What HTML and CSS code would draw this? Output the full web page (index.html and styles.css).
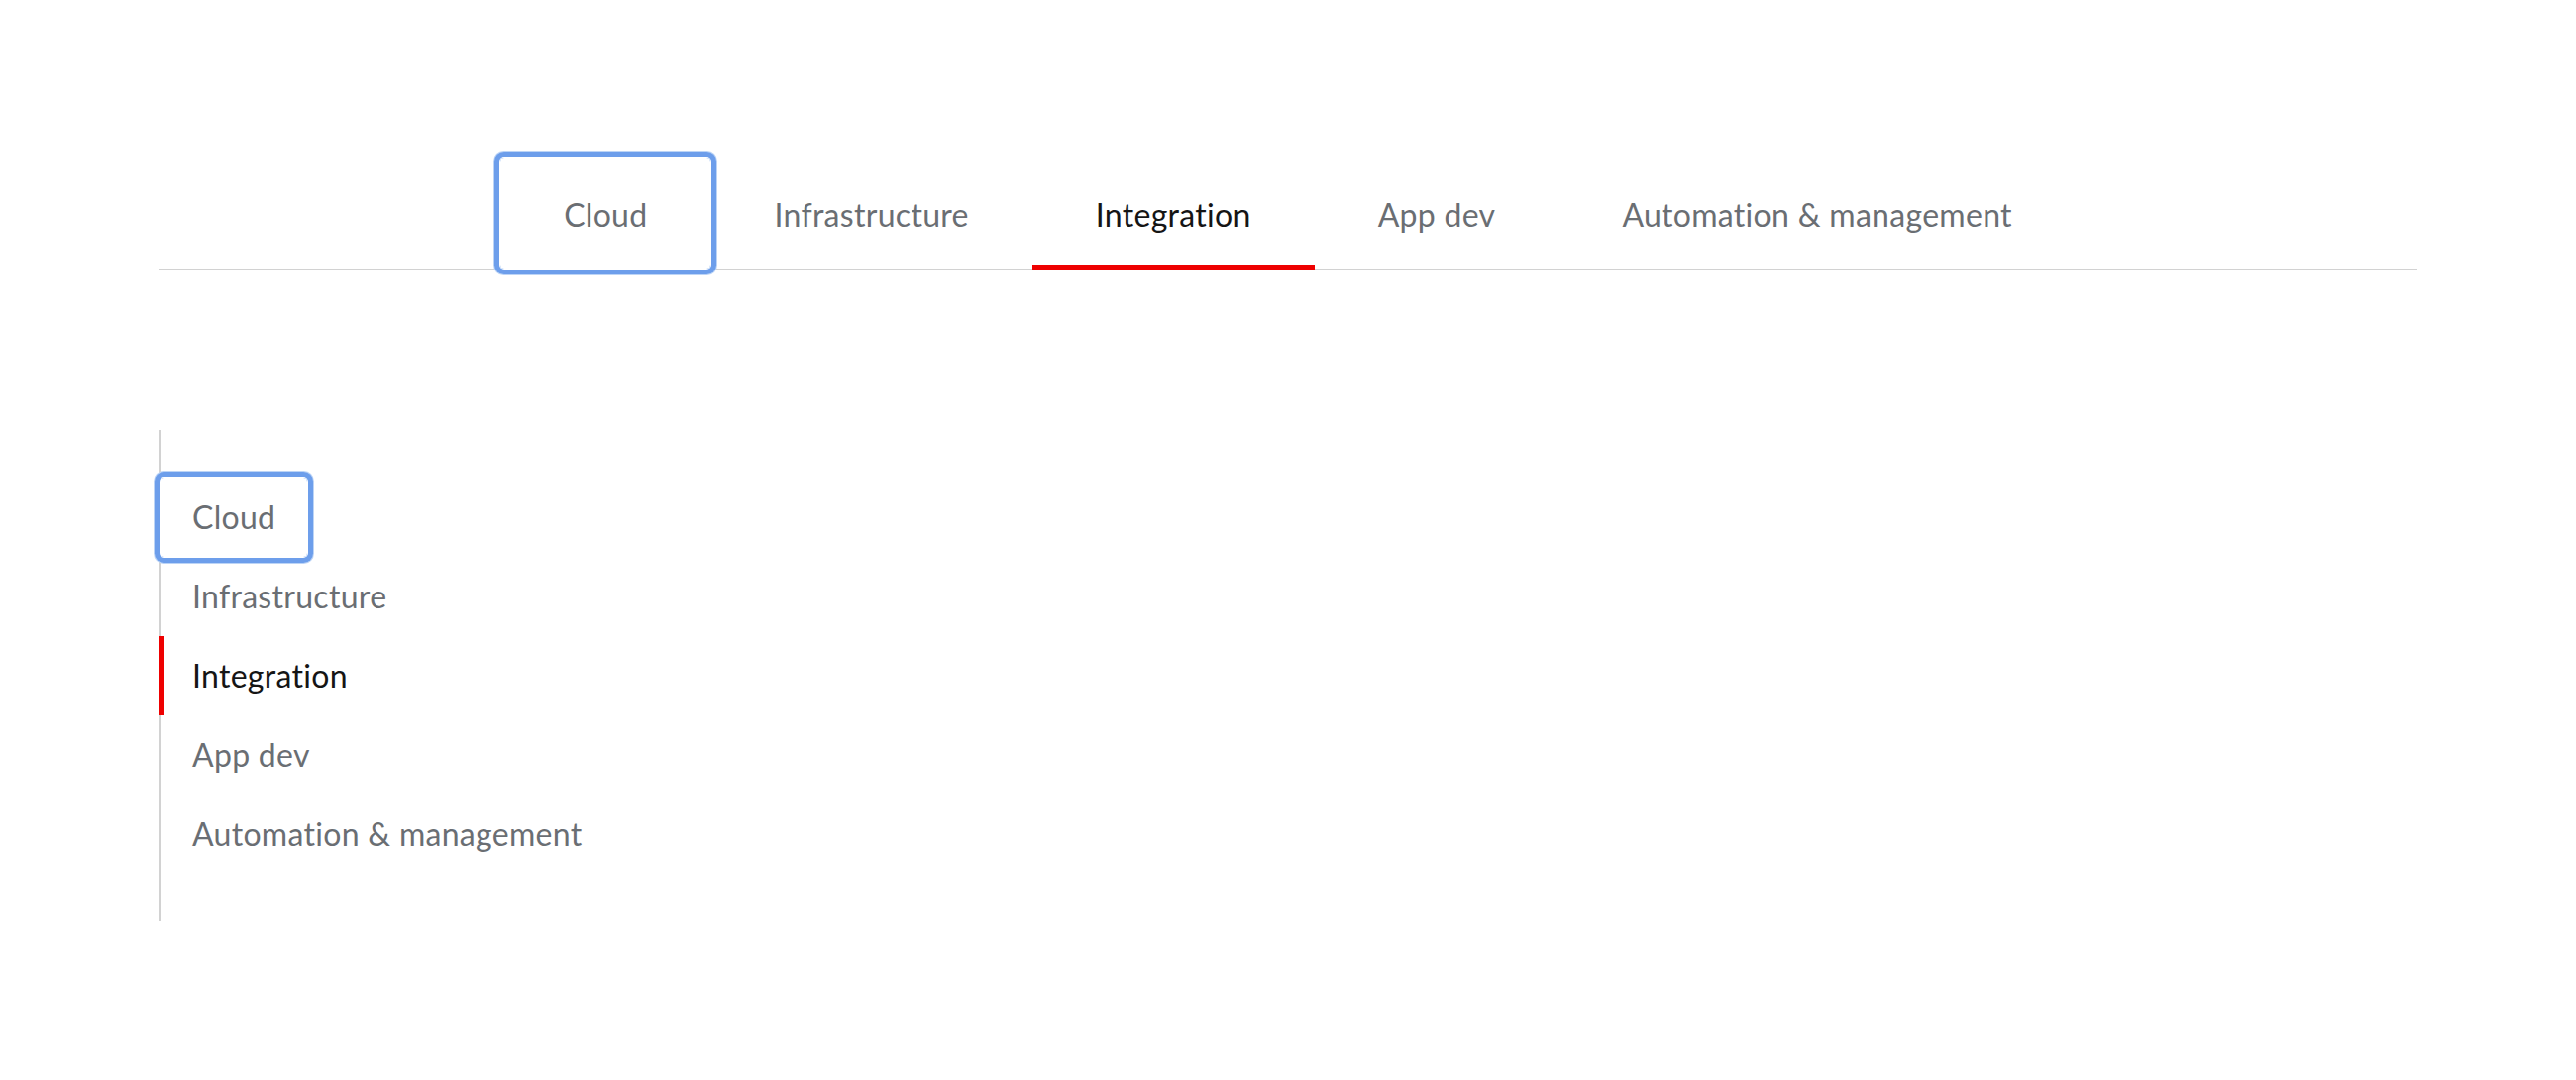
FILE: index.html
```html
<!DOCTYPE html>
<html lang="en">
<head>
<meta charset="utf-8">
<title>Tabs</title>
<link rel="stylesheet" href="styles.css">
</head>
<body>
<main class="page">
  <nav class="tabs" aria-label="Horizontal tabs">
    <ul class="tabs-list">
      <li class="tab"><button class="tab-link is-focused" type="button">Cloud</button></li>
      <li class="tab"><button class="tab-link" type="button">Infrastructure</button></li>
      <li class="tab is-active"><button class="tab-link" type="button">Integration</button></li>
      <li class="tab"><button class="tab-link" type="button">App dev</button></li>
      <li class="tab"><button class="tab-link" type="button">Automation &amp; management</button></li>
    </ul>
  </nav>

  <nav class="vtabs" aria-label="Vertical tabs">
    <ul class="vtabs-list">
      <li class="vtab"><button class="vtab-link is-focused" type="button">Cloud</button></li>
      <li class="vtab"><button class="vtab-link" type="button">Infrastructure</button></li>
      <li class="vtab is-active"><button class="vtab-link" type="button">Integration</button></li>
      <li class="vtab"><button class="vtab-link" type="button">App dev</button></li>
      <li class="vtab"><button class="vtab-link" type="button">Automation &amp; management</button></li>
    </ul>
  </nav>
</main>
</body>
</html>
```

FILE: styles.css
```css
html, body {
  margin: 0;
  padding: 0;
  background: #ffffff;
}

body {
  font-family: "Lato", "Open Sans", sans-serif;
  color: #151515;
}

.page {
  padding: 159px 160px 0;
}

ul {
  list-style: none;
  margin: 0;
  padding: 0;
}

button {
  font: inherit;
  background: none;
  border: 0;
  margin: 0;
  cursor: pointer;
}

/* Horizontal tabs */
.tabs {
  border-bottom: 2px solid #d2d2d2;
}

.tabs-list {
  display: flex;
  justify-content: center;
}

.tab {
  position: relative;
}

.tab-link {
  display: block;
  padding: 34px 64px 30px;
  font-size: 32px;
  line-height: 48px;
  letter-spacing: 0.3px;
  color: #6a6e73;
  border-radius: 4px;
}

.tab.is-active .tab-link {
  color: #151515;
}

.tab.is-active::after {
  content: "";
  position: absolute;
  left: 0;
  right: 0;
  bottom: -2px;
  height: 6px;
  background: #ee0000;
}

/* Focus ring */
.is-focused {
  position: relative;
  z-index: 1;
  box-shadow: 0 0 0 1px #ffffff, 0 0 0 6px #6d9eeb, 0 0 0 7px #bcd4f6;
}

/* Vertical tabs */
.vtabs {
  margin-top: 161px;
  display: flex;
}

.vtabs-list {
  display: flex;
  flex-direction: column;
  align-items: flex-start;
  border-left: 2px solid #d2d2d2;
  padding: 48px 0;
}

.vtab {
  position: relative;
}

.vtab-link {
  display: block;
  padding: 16px 32px;
  font-size: 32px;
  line-height: 48px;
  letter-spacing: 0.3px;
  color: #6a6e73;
  border-radius: 4px;
  text-align: left;
}

.vtab.is-active .vtab-link {
  color: #151515;
}

.vtab.is-active::before {
  content: "";
  position: absolute;
  left: -2px;
  top: 0;
  bottom: 0;
  width: 6px;
  background: #ee0000;
}
```
